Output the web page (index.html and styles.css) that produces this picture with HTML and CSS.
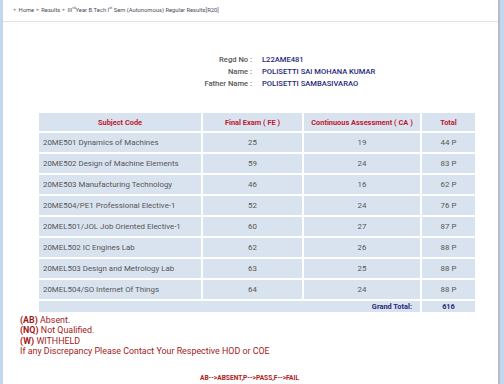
FILE: index.html
```html
<!DOCTYPE html>
<html>
<head>
<meta charset="utf-8">
<link rel="stylesheet" href="styles.css">
</head>
<body>
<div class="frame">
  <div class="edge-left"></div>
  <div class="main">
    <div class="crumbs">
      <span class="arr">&#9658;</span> Home <span class="arr">&#9658;</span> Results <span class="arr">&#9658;</span> III<sup>rd</sup>Year B.Tech I<sup>st</sup> Sem (Autonomous) Regular Results[R20]
    </div>
    <div class="info">
      <div class="lbl">Regd No :</div><div class="val">L22AME481</div>
      <div class="lbl">Name :</div><div class="val">POLISETTI SAI MOHANA KUMAR</div>
      <div class="lbl">Father Name :</div><div class="val">POLISETTI SAMBASIVARAO</div>
    </div>
    <table class="res">
      <thead>
        <tr><th class="c1">Subject Code</th><th class="c2">Final Exam ( FE )</th><th class="c3">Continuous Assessment ( CA )</th><th class="c4">Total</th></tr>
      </thead>
      <tbody>
        <tr><td class="sub">20ME501 Dynamics of Machines</td><td>25</td><td>19</td><td>44 P</td></tr>
        <tr><td class="sub">20ME502 Design of Machine Elements</td><td>59</td><td>24</td><td>83 P</td></tr>
        <tr><td class="sub">20ME503 Manufacturing Technology</td><td>46</td><td>16</td><td>62 P</td></tr>
        <tr><td class="sub">20ME504/PE1 Professional Elective-1</td><td>52</td><td>24</td><td>76 P</td></tr>
        <tr><td class="sub">20MEL501/JOL Job Oriented Elective-1</td><td>60</td><td>27</td><td>87 P</td></tr>
        <tr><td class="sub">20MEL502 IC Engines Lab</td><td>62</td><td>26</td><td>88 P</td></tr>
        <tr><td class="sub">20MEL503 Design and Metrology Lab</td><td>63</td><td>25</td><td>88 P</td></tr>
        <tr><td class="sub">20MEL504/SO Internet Of Things</td><td>64</td><td>24</td><td>88 P</td></tr>
        <tr class="gt"><td colspan="3" class="gtl">Grand Total:</td><td class="gtv">616</td></tr>
      </tbody>
    </table>
    <div class="legend">
      <div><b>(AB)</b> Absent.</div>
      <div><b>(NQ)</b> Not Qualified.</div>
      <div><b>(W)</b> WITHHELD</div>
      <div>If any Discrepancy Please Contact Your Respective HOD or COE</div>
    </div>
    <div class="codes">AB--&gt;ABSENT,P--&gt;PASS,F--&gt;FAIL</div>
  </div>
  <div class="edge-right"></div>
</div>
</body>
</html>
```
FILE: styles.css
```css
html, body {
  margin: 0;
  padding: 0;
  background: #fff;
}
body {
  font-family: Roboto, "Liberation Sans", sans-serif;
  width: 504px;
  height: 384px;
  overflow: hidden;
}
.frame {
  display: flex;
  height: 384px;
}
.edge-left {
  width: 3px;
  background: #c3d7ee;
  flex: none;
}
.edge-right {
  width: 4px;
  background: #c3d7ee;
  border-left: 2px solid #b9bcc2;
  flex: none;
}
.main {
  flex: 1;
  display: flex;
  flex-direction: column;
}
.crumbs {
  height: 21px;
  border-bottom: 1px solid #e4e4e4;
  font-size: 5.8px;
  color: #4a4a5a;
  padding-left: 10px;
  line-height: 20px;
  box-sizing: content-box;
}
.crumbs .arr {
  color: #999;
  font-size: 4.2px;
  vertical-align: 1px;
}
.crumbs sup {
  font-size: 3.8px;
  vertical-align: 3px;
  line-height: 0;
}
.info {
  display: grid;
  grid-template-columns: 249px auto;
  column-gap: 10px;
  margin-top: 32px;
  font-size: 7.6px;
  font-weight: 500;
  line-height: 12px;
}
.info .lbl {
  text-align: right;
  color: #555;
}
.info .val {
  color: #1f2a7a;
}
.res {
  margin: 21px 0 0 34px;
  width: 440px;
  border-collapse: separate;
  border-spacing: 2px;
  background: #fff;
  font-size: 7.9px;
  color: #555;
}
.res th {
  background: #d9e3f0;
  color: #c0182f;
  font-weight: 700;
  font-size: 7.4px;
  height: 18px;
  padding: 0;
}
.res .c1 { width: 162px; }
.res .c2 { width: 99px; }
.res .c3 { width: 116px; }
.res td {
  background: #d9e3f0;
  height: 19px;
  padding: 0;
  text-align: center;
}
.res td.sub {
  text-align: left;
  padding-left: 4px;
}
.res tr.gt td {
  height: 11px;
  font-size: 7.4px;
  color: #1f2a7a;
  font-weight: 700;
}
.res td.gtl {
  text-align: right;
  padding-right: 8px;
}
.legend {
  margin: 1px 0 0 17px;
  font-size: 8.9px;
  line-height: 10.4px;
  color: #a31a1a;
}
.legend b {
  font-weight: 700;
}
.codes {
  margin-top: 17px;
  text-align: center;
  padding-right: 2px;
  font-size: 6.6px;
  font-weight: 700;
  color: #b01c1c;
}
```
